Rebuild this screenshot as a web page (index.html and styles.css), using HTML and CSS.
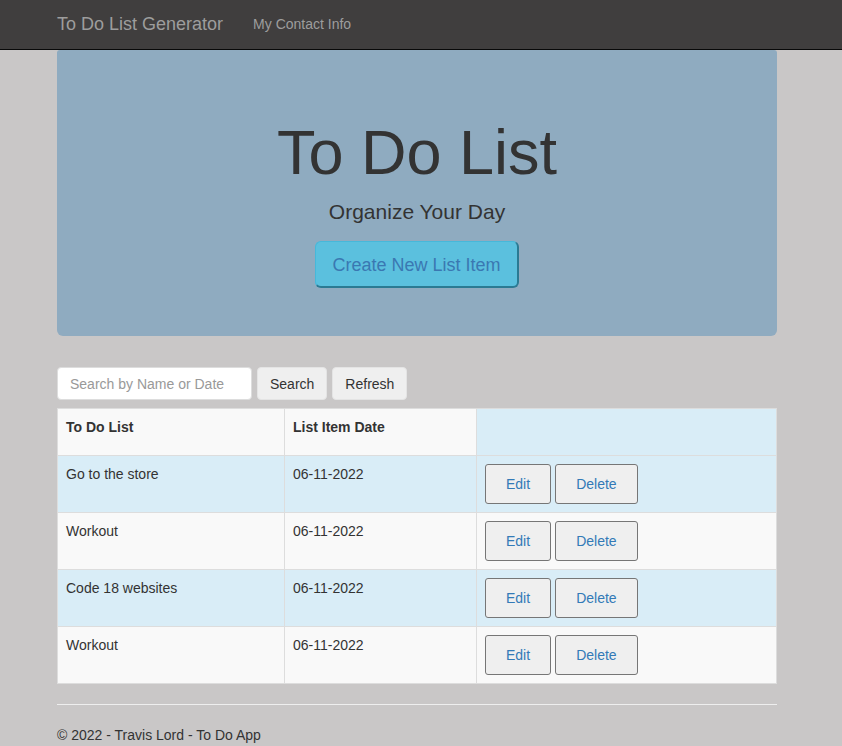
FILE: index.html
```html
<!DOCTYPE html>
<html lang="en">
<head>
<meta charset="utf-8">
<title>To Do List Generator</title>
<link rel="stylesheet" href="styles.css">
</head>
<body>
<nav class="navbar">
  <div class="shell">
    <div class="container nav-inner">
      <a class="brand" href="#">To Do List Generator</a>
      <a class="nav-link" href="#">My Contact Info</a>
    </div>
  </div>
</nav>
<div class="shell">
  <div class="container">
    <section class="jumbotron">
      <h1>To Do List</h1>
      <p class="lead">Organize Your Day</p>
      <div class="cta-row"><button class="btn-lg">Create New List Item</button></div>
    </section>

    <form class="search-bar">
      <input class="search-input" type="text" placeholder="Search by Name or Date">
      <button type="button" class="btn-plain">Search</button>
      <button type="button" class="btn-plain">Refresh</button>
    </form>

    <table class="todo-table">
      <thead>
        <tr>
          <th class="col-name">To Do List</th>
          <th class="col-date">List Item Date</th>
          <th class="col-actions info"></th>
        </tr>
      </thead>
      <tbody>
        <tr class="info">
          <td>Go to the store</td>
          <td>06-11-2022</td>
          <td><button class="btn-act">Edit</button><button class="btn-act">Delete</button></td>
        </tr>
        <tr class="plain">
          <td>Workout</td>
          <td>06-11-2022</td>
          <td><button class="btn-act">Edit</button><button class="btn-act">Delete</button></td>
        </tr>
        <tr class="info">
          <td>Code 18 websites</td>
          <td>06-11-2022</td>
          <td><button class="btn-act">Edit</button><button class="btn-act">Delete</button></td>
        </tr>
        <tr class="plain">
          <td>Workout</td>
          <td>06-11-2022</td>
          <td><button class="btn-act">Edit</button><button class="btn-act">Delete</button></td>
        </tr>
      </tbody>
    </table>

    <hr class="rule">
    <footer class="footer">
      <p>&copy; 2022 - Travis Lord - To Do App</p>
    </footer>
  </div>
</div>
</body>
</html>
```
FILE: styles.css
```css
* { box-sizing: border-box; }

html, body {
  margin: 0;
  padding: 0;
}

body {
  font-family: "Liberation Sans", Arial, sans-serif;
  font-size: 14px;
  line-height: 1.42857;
  color: #333;
  background: #c9c7c7;
}

.shell {
  padding-right: 8px;
}

.container {
  width: 720px;
  margin: 0 auto;
}

/* Navbar */
.navbar {
  background: #403e3e;
  border-bottom: 1px solid #080808;
  height: 50px;
}

.nav-inner {
  display: flex;
  align-items: center;
  height: 49px;
}

.brand {
  font-size: 18px;
  line-height: 20px;
  color: #9d9d9d;
  text-decoration: none;
  padding: 14px 30px 15px 0;
}

.nav-link {
  font-size: 14px;
  line-height: 20px;
  color: #9d9d9d;
  text-decoration: none;
  padding: 14px 0 15px;
}

/* Jumbotron */
.jumbotron {
  background: #8fabc0;
  border-radius: 3px 3px 6px 6px;
  padding: 48px 60px;
  text-align: center;
  margin-bottom: 31px;
}

.jumbotron h1 {
  font-family: "Liberation Sans", Arial, sans-serif;
  font-weight: 400;
  font-size: 63px;
  line-height: 1.1;
  color: #333;
  margin: 20px 0 10px;
}

.lead {
  font-size: 21px;
  line-height: 30px;
  margin: 0 0 14px;
  color: #333;
}

.cta-row {
  display: flex;
  justify-content: center;
}

.btn-lg {
  font-family: "Liberation Sans", Arial, sans-serif;
  font-size: 18px;
  line-height: 24px;
  padding: 10px 16px 9px 16px;
  background: #5bc0de;
  color: #3a78b2;
  border: 1px solid #46b8da;
  border-right: 2px solid #2b7a93;
  border-bottom: 2px solid #2b7a93;
  border-radius: 6px;
  height: 47px;
  white-space: nowrap;
  cursor: pointer;
}

/* Search */
.search-bar {
  display: flex;
  align-items: center;
  gap: 5px;
  margin: 0 0 8px;
}

.search-input {
  width: 195px;
  height: 33px;
  padding: 6px 12px;
  border: 1px solid #ddd;
  border-radius: 4px;
  background: #fff;
  font-family: "Liberation Sans", Arial, sans-serif;
  font-size: 14px;
  color: #555;
}

.search-input::placeholder {
  color: #999;
}

.btn-plain {
  height: 33px;
  padding: 6px 12px;
  background: #efefef;
  border: 1px solid #e4e4e4;
  border-radius: 4px;
  font-family: "Liberation Sans", Arial, sans-serif;
  font-size: 14px;
  line-height: 20px;
  color: #333;
  cursor: pointer;
}

/* Table */
.todo-table {
  width: 720px;
  border-collapse: collapse;
  border: 1px solid #ddd;
  table-layout: fixed;
}

.todo-table th,
.todo-table td {
  border: 1px solid #ddd;
  padding: 8px;
  vertical-align: top;
  text-align: left;
  line-height: 20px;
}

.todo-table th {
  font-weight: 700;
  height: 47px;
  background: #f9f9f9;
}

.todo-table td {
  height: 57px;
}

.col-name { width: 227px; }
.col-date { width: 192px; }

.todo-table th.info,
.todo-table tr.info td {
  background: #d9edf7;
}

.todo-table tr.plain td {
  background: #f9f9f9;
}

.btn-act {
  height: 40px;
  padding: 9px 20px;
  margin-right: 4px;
  background: #efefef;
  border: 1px solid #767676;
  border-radius: 3px;
  font-family: "Liberation Sans", Arial, sans-serif;
  font-size: 14px;
  line-height: 20px;
  color: #337ab7;
  cursor: pointer;
}

/* Footer */
.rule {
  border: 0;
  border-top: 1px solid #eee;
  margin: 20px 0;
}

.footer {
  padding-top: 1px;
}

.footer p {
  margin: 0 0 10px;
}
```
